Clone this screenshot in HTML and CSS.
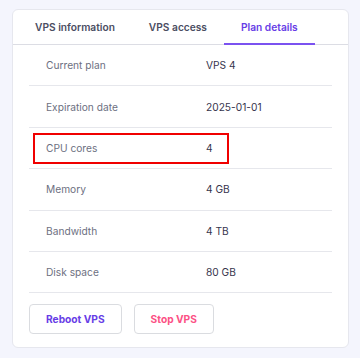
FILE: index.html
```html
<!DOCTYPE html>
<html lang="en">
<head>
  <meta charset="UTF-8" />
  <meta name="viewport" content="width=device-width, initial-scale=1.0"/>
  <title>Plan details</title>
  <link rel="stylesheet" href="styles.css">
</head>
<body>

  <div class="card">
    <div class="tabs">
      <div class="tab">VPS information</div>
      <div class="tab">VPS access</div>
      <div class="tab active">Plan details</div>
    </div>

    <div class="details">
      <div class="row">
        <span class="label">Current plan</span>
        <span class="value">VPS 4</span>
      </div>
      <div class="row">
        <span class="label">Expiration date</span>
        <span class="value">2025-01-01</span>
      </div>
      <div class="row highlight">
        <span class="label">CPU cores</span>
        <span class="value">4</span>
      </div>
      <div class="row">
        <span class="label">Memory</span>
        <span class="value">4 GB</span>
      </div>
      <div class="row">
        <span class="label">Bandwidth</span>
        <span class="value">4 TB</span>
      </div>
      <div class="row">
        <span class="label">Disk space</span>
        <span class="value">80 GB</span>
      </div>

      <div class="actions">
        <button class="btn btn-primary">Reboot VPS</button>
        <button class="btn btn-danger">Stop VPS</button>
      </div>
    </div>
  </div>

</body>
</html>
```

FILE: styles.css
```css
body {
  margin: 0;
  padding: 9px 12px 12px;
  font-family: 'Inter', 'Noto Sans', sans-serif;
  background: #f4f5fd;
  color: #36344d;
}

.card {
  background: #fff;
  border: 1px solid #e6e7ee;
  border-radius: 6px;
  box-sizing: border-box;
  width: 337px;
}

.tabs {
  display: flex;
  padding-left: 5px;
  border-bottom: 1px solid #dcdde4;
  height: 35px;
  box-sizing: border-box;
}

.tab {
  padding: 1px 17px 0;
  font-size: 10.2px;
  font-weight: 600;
  color: #4b4d62;
  display: flex;
  align-items: center;
  border-bottom: 2px solid transparent;
  margin-bottom: -1px;
}

.tab.active {
  color: #673de6;
  border-bottom-color: #7b52f0;
}

.details {
  padding: 0 16px 13px 16px;
}

.row {
  position: relative;
  display: flex;
  align-items: center;
  height: 41.4px;
  box-sizing: border-box;
  padding-left: 17px;
  border-bottom: 1px solid #e6e7ec;
  font-size: 10.2px;
}

.row:last-of-type {
  border-bottom: none;
}

.label {
  width: 160px;
  color: #6d7081;
}

.value {
  color: #36344d;
}

.highlight::after {
  content: "";
  position: absolute;
  left: 4px;
  top: 5px;
  width: 196px;
  height: 31px;
  box-sizing: border-box;
  border: 2px solid #f00000;
}

.actions {
  display: flex;
  gap: 12px;
  margin-top: 11px;
}

.btn {
  height: 30px;
  padding: 0 16px;
  font-family: inherit;
  font-size: 10.2px;
  font-weight: 700;
  background: #fff;
  border: 1px solid #dadce0;
  border-radius: 4px;
  cursor: pointer;
}

.btn-primary {
  color: #673de6;
}

.btn-danger {
  color: #fc5185;
}
```
